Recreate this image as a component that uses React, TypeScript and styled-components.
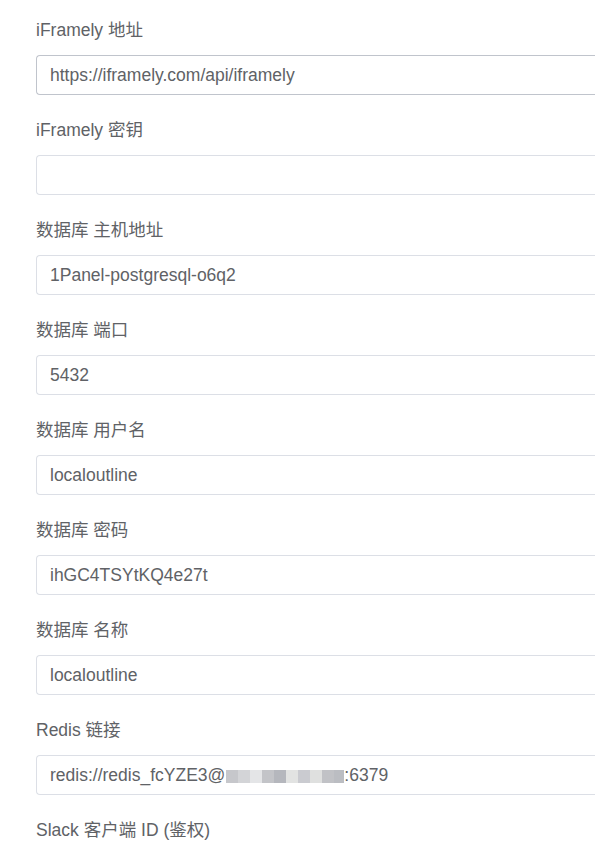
import React from "react";
import styled, { createGlobalStyle } from "styled-components";

const GlobalStyle = createGlobalStyle`
  html, body {
    margin: 0;
    padding: 0;
    background: #ffffff;
    overflow: hidden;
  }
  body {
    font-family: "Liberation Sans", Arial, "Noto Sans CJK SC", sans-serif;
  }
`;

const SettingsForm = styled.form`
  box-sizing: border-box;
  width: 595px;
  padding: 18px 0 0 36px;
  display: flex;
  flex-direction: column;
  gap: 23px;
`;

const FormItem = styled.div`
  display: flex;
  flex-direction: column;
  gap: 13px;
`;

const FieldLabel = styled.label`
  font-size: 17.5px;
  line-height: 24px;
  height: 24px;
  color: #606266;
  white-space: nowrap;
`;

const FieldBox = styled.div<{ $active?: boolean }>`
  box-sizing: border-box;
  height: 40px;
  border: 1px solid ${(p) => (p.$active ? "#c0c4cc" : "#dcdfe6")};
  border-right: none;
  border-radius: 4px 0 0 4px;
  background: #ffffff;
  padding: 0 13px;
  display: flex;
  align-items: center;
  font-size: 17.5px;
  color: #606266;
  white-space: nowrap;
  overflow: hidden;
`;

const Masked = styled.span`
  display: inline-flex;
  height: 13px;
  margin: 2px 0 0 1px;
`;

const MaskBlock = styled.span<{ $tone: string; $w?: number }>`
  display: inline-block;
  width: ${(p) => p.$w ?? 12}px;
  height: 13px;
  background: ${(p) => p.$tone};
`;

const maskTones = [
  "#c6c7cb",
  "#d3d4d7",
  "#e4e5e7",
  "#c3c4c8",
  "#b5b7bd",
  "#e2e3e2",
  "#cacbd0",
  "#dfe0df",
  "#c1c2c6",
];

const fields: { label: string; value: string; active?: boolean }[] = [
  { label: "iFramely 地址", value: "https://iframely.com/api/iframely", active: true },
  { label: "iFramely 密钥", value: "" },
  { label: "数据库 主机地址", value: "1Panel-postgresql-o6q2" },
  { label: "数据库 端口", value: "5432" },
  { label: "数据库 用户名", value: "localoutline" },
  { label: "数据库 密码", value: "ihGC4TSYtKQ4e27t" },
  { label: "数据库 名称", value: "localoutline" },
  { label: "Redis 链接", value: "redis" },
  { label: "Slack 客户端 ID (鉴权)", value: "" },
];

const App: React.FC = () => {
  return (
    <>
      <GlobalStyle />
      <SettingsForm>
        {fields.map((f, i) => (
          <FormItem key={i}>
            <FieldLabel>{f.label}</FieldLabel>
            {i < fields.length - 1 && (
              <FieldBox $active={f.active}>
                {f.value === "redis" ? (
                  <>
                    <span>redis://redis_fcYZE3@</span>
                    <Masked>
                      {maskTones.map((t, k) => (
                        <MaskBlock key={k} $tone={t} />
                      ))}
                      <MaskBlock $tone="#bbbdc2" $w={10} />
                    </Masked>
                    <span>:6379</span>
                  </>
                ) : (
                  f.value
                )}
              </FieldBox>
            )}
          </FormItem>
        ))}
      </SettingsForm>
    </>
  );
};

export default App;
